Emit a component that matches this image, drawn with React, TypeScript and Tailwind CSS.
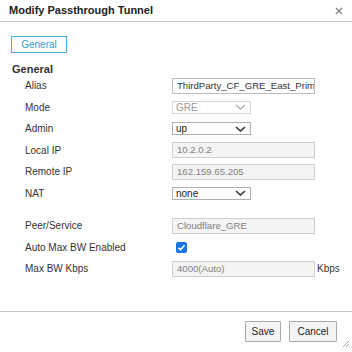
// Modify Passthrough Tunnel dialog

function Chevron({ disabled }: { disabled?: boolean }) {
  return (
    <svg width="11" height="6" viewBox="0 0 11 6" className="shrink-0">
      <polyline
        points="1,1 5.5,5 10,1"
        fill="none"
        stroke={disabled ? '#b5b5b5' : '#333'}
        strokeWidth="1.6"
      />
    </svg>
  )
}

function TextBox({ value, disabled }: { value: string; disabled?: boolean }) {
  return (
    <div
      className={
        disabled
          ? 'w-[143px] h-[16px] border border-[#cfcfcf] bg-[#f4f4f4] text-[#808080] text-[9.6px] px-[4px] flex items-center overflow-hidden whitespace-nowrap'
          : 'w-[143px] h-[16px] border border-[#bdbdbd] bg-white text-[#333] text-[9.6px] px-[4px] flex items-center overflow-hidden whitespace-nowrap'
      }
    >
      {value}
    </div>
  )
}

function Select({ value, disabled }: { value: string; disabled?: boolean }) {
  return (
    <div
      className={
        disabled
          ? 'w-[79px] h-[13px] border border-[#d6d6d6] bg-white text-[#9a9a9a] pl-[3px] pr-[4px] flex items-center justify-between'
          : 'w-[79px] h-[13px] border border-[#b0b0b0] bg-white text-[#222] pl-[3px] pr-[4px] flex items-center justify-between'
      }
    >
      <span>{value}</span>
      <Chevron disabled={disabled} />
    </div>
  )
}

function Row({ label, children }: { label: string; children: React.ReactNode }) {
  return (
    <div className="h-[21.5px] flex items-center">
      <div className="w-[172px] pl-[25px] text-[#333] shrink-0">{label}</div>
      {children}
    </div>
  )
}

export default function App() {
  return (
    <div
      className="relative w-[352px] h-[352px] bg-white flex flex-col text-[10px] text-[#333]"
      style={{ fontFamily: '"Liberation Sans", Arial, sans-serif' }}
    >
      {/* header */}
      <div className="h-[22px] border-b border-[#c4c4c4] flex items-center justify-between pl-[9px] pr-[9px] shrink-0">
        <span className="text-[11px] font-bold text-[#222]">Modify Passthrough Tunnel</span>
        <svg width="8" height="8" viewBox="0 0 8 8">
          <path d="M1 1L7 7M7 1L1 7" stroke="#8a8a8a" strokeWidth="1.5" />
        </svg>
      </div>

      {/* body */}
      <div className="flex-1 flex flex-col">
        <div className="pl-[11px] mt-[14px]">
          <div className="w-[56px] h-[17px] border border-[#3cb0de] text-[#2a9fd2] flex items-center justify-center">
            General
          </div>
        </div>

        <div className="mt-[10px] h-[12px] leading-[12px] pl-[12px] text-[11px] font-bold text-[#333]">
          General
        </div>

        <Row label="Alias">
          <TextBox value="ThirdParty_CF_GRE_East_Prima" />
        </Row>
        <Row label="Mode">
          <Select value="GRE" disabled />
        </Row>
        <Row label="Admin">
          <Select value="up" />
        </Row>
        <Row label="Local IP">
          <TextBox value="10.2.0.2" disabled />
        </Row>
        <Row label="Remote IP">
          <TextBox value="162.159.65.205" disabled />
        </Row>
        <Row label="NAT">
          <Select value="none" />
        </Row>

        <div className="h-[11px]" />

        <Row label="Peer/Service">
          <TextBox value="Cloudflare_GRE" disabled />
        </Row>
        <Row label="Auto Max BW Enabled">
          <div className="ml-[4px] w-[11px] h-[11px] rounded-[2px] bg-[#1a73e8] flex items-center justify-center">
            <svg width="9" height="9" viewBox="0 0 9 9">
              <polyline points="1.5,4.8 3.5,6.8 7.5,2.2" fill="none" stroke="#fff" strokeWidth="1.6" />
            </svg>
          </div>
        </Row>
        <Row label="Max BW Kbps">
          <TextBox value="4000(Auto)" disabled />
          <span className="ml-[2px] text-[#333]">Kbps</span>
        </Row>
      </div>

      {/* footer */}
      <div className="h-[41px] border-t border-[#c4c4c4] flex justify-end items-start gap-[8px] pr-[15px] pt-[9px] shrink-0">
        <button className="w-[36px] h-[21px] border border-[#a9a9a9] bg-[#f4f4f4] text-[#222] rounded-[1px]">
          Save
        </button>
        <button className="w-[48px] h-[21px] border border-[#a9a9a9] bg-[#f4f4f4] text-[#222] rounded-[1px]">
          Cancel
        </button>
      </div>

      {/* resize grip */}
      <svg className="absolute right-[2px] bottom-[4px]" width="8" height="8" viewBox="0 0 8 8">
        <path d="M7 1L1 7M7 4L4 7M7 6.5L6.5 7" stroke="#9a9a9a" strokeWidth="0.9" />
      </svg>
    </div>
  )
}
